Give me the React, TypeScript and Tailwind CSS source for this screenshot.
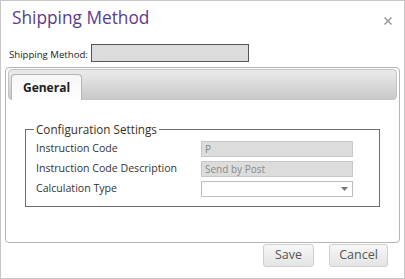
import React from "react";

export default function App() {
  return (
    <div className="w-[405px] h-[279px] bg-white border border-[#c6c6c6] flex flex-col font-['Open_Sans','Noto_Sans',sans-serif]">
      <div className="flex items-start justify-between pl-[11px] pr-[12px] pt-[5px] h-[39px]">
        <div className="text-[17.3px] leading-[24px] text-[#5a3c8c]">Shipping Method</div>
        <svg width="8" height="8" viewBox="0 0 8 8" className="mt-[11px]">
          <path d="M0.5 0.5 L7.5 7.5 M7.5 0.5 L0.5 7.5" stroke="#9a9a9a" strokeWidth="1.5" />
        </svg>
      </div>
      <div className="flex items-center pl-[8px] h-[18px] mt-[4px]">
        <span className="text-[9.6px] text-[#222] mr-[3px] mt-[4px]">Shipping Method:</span>
        <div className="w-[158px] h-[18px] bg-[#dcdcdc] border border-[#555]" />
      </div>
      <div className="mx-[4px] mt-[5px] h-[176px] border border-[#b5b5b5] rounded-[4px] px-[2px] pt-[1px] flex flex-col">
        <div className="h-[31px] rounded-[4px] border border-[#c4c4c4] bg-gradient-to-b from-[#ebebeb] to-[#c9c9c9] flex items-end pl-[2px]">
          <div className="w-[71px] h-[26px] bg-gradient-to-b from-[#f6f6f6] to-white border border-[#b5b5b5] border-b-0 rounded-t-[4px] flex items-center justify-center text-[12px] font-bold text-[#222] -mb-px">
            General
          </div>
        </div>
        <fieldset className="mx-[17px] mt-[21px] border border-[#6e6e6e] pl-[10px] pr-[26px] pb-[9px]">
          <legend className="-ml-[2px] px-[2px] text-[11.7px] leading-[16px] text-[#3a3020]">
            Configuration Settings
          </legend>
          <div className="flex flex-col gap-[3px] mt-[4px]">
            <div className="flex items-center justify-between h-[16px]">
              <span className="text-[10.6px] text-[#333]">Instruction Code</span>
              <div className="w-[152px] h-[16px] bg-[#dcdcdc] border border-[#c8c8c8] text-[10px] text-[#8a8a8a] pl-[3px] leading-[14px]">
                P
              </div>
            </div>
            <div className="flex items-center justify-between h-[16px] mt-[1px]">
              <span className="text-[10.6px] text-[#333]">Instruction Code Description</span>
              <div className="w-[152px] h-[16px] bg-[#dcdcdc] border border-[#c8c8c8] text-[10px] text-[#8a8a8a] pl-[3px] leading-[14px]">
                Send by Post
              </div>
            </div>
            <div className="flex items-center justify-between h-[16px] mt-[1px]">
              <span className="text-[10.6px] text-[#333]">Calculation Type</span>
              <div className="w-[152px] h-[16px] bg-white border border-[#bdbdbd] flex items-center justify-end pr-[4px]">
                <svg width="7" height="4" viewBox="0 0 7 4">
                  <path d="M0 0 L7 0 L3.5 4 Z" fill="#777" />
                </svg>
              </div>
            </div>
          </div>
        </fieldset>
      </div>
      <div className="flex justify-end gap-[15px] pr-[16px] mt-[1px]">
        <button className="w-[51px] h-[23px] rounded-[3px] border border-[#cfcfcf] bg-gradient-to-b from-[#f7f7f7] to-[#e4e4e4] text-[12.5px] text-[#555]">
          Save
        </button>
        <button className="w-[59px] h-[23px] rounded-[3px] border border-[#cfcfcf] bg-gradient-to-b from-[#f7f7f7] to-[#e4e4e4] text-[12.5px] text-[#555]">
          Cancel
        </button>
      </div>
    </div>
  );
}
